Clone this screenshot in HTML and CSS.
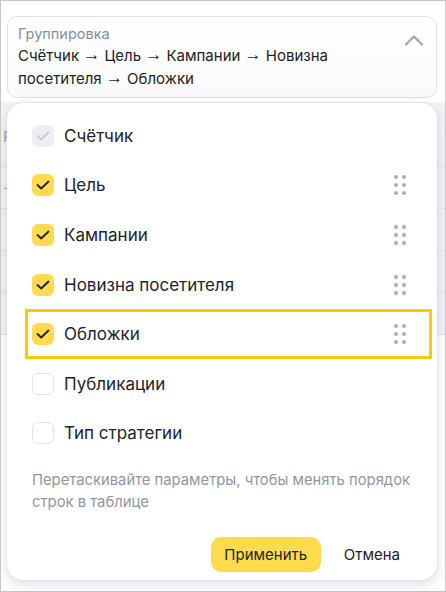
FILE: index.html
```html
<!DOCTYPE html>
<html lang="ru">
<head>
<meta charset="utf-8">
<link rel="stylesheet" href="styles.css">
</head>
<body>
<div class="frame">
  <div class="field">
    <div class="field-text">
      <div class="field-label">Группировка</div>
      <div class="field-value">Счётчик <span class="arr">→</span> Цель <span class="arr">→</span> Кампании <span class="arr">→</span> Новизна посетителя <span class="arr">→</span> Обложки</div>
    </div>
    <svg class="chevron" width="20" height="12" viewBox="0 0 20 12"><path d="M2 10.5 L10 2.5 L18 10.5" fill="none" stroke="#a3a8b9" stroke-width="2.4" stroke-linecap="round" stroke-linejoin="round"/></svg>
  </div>
  <div class="table">
    <div class="trow trow-head"><span class="tcell">Р</span></div>
    <div class="trow"><span class="tcell">-</span></div>
    <div class="trow"></div>
    <div class="trow"></div>
    <div class="trow"></div>
  </div>

  <div class="popup">
    <div class="list">
      <div class="row">
        <span class="cb cb-disabled"><svg width="14" height="10" viewBox="0 0 14 10"><path d="M1.5 5 L5.2 8.5 L12.5 1.5" fill="none" stroke="#c6cad6" stroke-width="1.8" stroke-linecap="round" stroke-linejoin="round"/></svg></span>
        <span class="label">Счётчик</span>
      </div>
      <div class="row">
        <span class="cb cb-on"><svg width="14" height="10" viewBox="0 0 14 10"><path d="M1.5 5 L5.2 8.5 L12.5 1.5" fill="none" stroke="#222" stroke-width="1.8" stroke-linecap="round" stroke-linejoin="round"/></svg></span>
        <span class="label">Цель</span>
        <span class="drag"><i></i><i></i><i></i><i></i><i></i><i></i></span>
      </div>
      <div class="row">
        <span class="cb cb-on"><svg width="14" height="10" viewBox="0 0 14 10"><path d="M1.5 5 L5.2 8.5 L12.5 1.5" fill="none" stroke="#222" stroke-width="1.8" stroke-linecap="round" stroke-linejoin="round"/></svg></span>
        <span class="label">Кампании</span>
        <span class="drag"><i></i><i></i><i></i><i></i><i></i><i></i></span>
      </div>
      <div class="row">
        <span class="cb cb-on"><svg width="14" height="10" viewBox="0 0 14 10"><path d="M1.5 5 L5.2 8.5 L12.5 1.5" fill="none" stroke="#222" stroke-width="1.8" stroke-linecap="round" stroke-linejoin="round"/></svg></span>
        <span class="label">Новизна посетителя</span>
        <span class="drag"><i></i><i></i><i></i><i></i><i></i><i></i></span>
      </div>
      <div class="row row-active">
        <span class="cb cb-on"><svg width="14" height="10" viewBox="0 0 14 10"><path d="M1.5 5 L5.2 8.5 L12.5 1.5" fill="none" stroke="#222" stroke-width="1.8" stroke-linecap="round" stroke-linejoin="round"/></svg></span>
        <span class="label">Обложки</span>
        <span class="drag"><i></i><i></i><i></i><i></i><i></i><i></i></span>
      </div>
      <div class="row">
        <span class="cb cb-off"></span>
        <span class="label">Публикации</span>
      </div>
      <div class="row">
        <span class="cb cb-off"></span>
        <span class="label">Тип стратегии</span>
      </div>
    </div>
    <p class="hint">Перетаскивайте параметры, чтобы менять порядок строк в таблице</p>
    <div class="actions">
      <button class="btn btn-apply">Применить</button>
      <button class="btn btn-cancel">Отмена</button>
    </div>
  </div>
</div>
</body>
</html>
```

FILE: styles.css
```css
* { box-sizing: border-box; }
html, body { margin: 0; padding: 0; }
body {
  font-family: "Inter", "Roboto", "Liberation Sans", sans-serif;
  color: #222;
  background: #fff;
}
.frame {
  position: relative;
  width: 446px;
  height: 592px;
  border: 1px solid #c6c6c6;
  background: #fff;
  overflow: hidden;
}
.field {
  margin: 15px 8px 0 6px;
  height: 82px;
  border: 1px solid #dfe1ea;
  border-radius: 10px;
  background: linear-gradient(#fff, #fafafc);
  display: flex;
  align-items: flex-start;
  padding: 7px 12px 0 10px;
}
.field-text { flex: 1; }
.field-label {
  font-size: 14.5px;
  line-height: 20px;
  color: #8b8d98;
}
.field-value {
  font-size: 15px;
  line-height: 23px;
  color: #222;
  width: 320px;
}
.arr {
  display: inline-block;
  font-family: "Liberation Sans", sans-serif;
  font-size: 17px;
  line-height: 17px;
  vertical-align: 1px;
}
.chevron { margin-top: 10px; }
.table {
  margin-top: 4px;
  background: #f2f3f7;
}
.trow {
  height: 42px;
  border-bottom: 1px solid #e2e4ec;
  padding-left: 2px;
  font-size: 15px;
  line-height: 42px;
  color: #9aa0b4;
}
.trow-head { height: 65px; line-height: 70px; }
.popup {
  position: absolute;
  left: 6px;
  top: 102px;
  width: 430px;
  height: 477px;
  background: #fff;
  border-radius: 16px;
  box-shadow: 0 4px 12px rgba(60, 70, 120, 0.18), 0 0 2px rgba(60, 70, 120, 0.12);
  padding: 8px 0 0 0;
}
.list { display: flex; flex-direction: column; }
.row {
  display: flex;
  align-items: center;
  height: 49.6px;
  margin-left: 18px;
  width: 407px;
  border: 3px solid transparent;
  padding: 0 23px 0 4px;
}
.row-active { border-color: #fdcb00; }
.cb {
  width: 22px;
  height: 22px;
  border-radius: 6px;
  display: flex;
  align-items: center;
  justify-content: center;
  flex: none;
}
.cb-on { background: #ffdb4d; }
.cb-disabled { background: #eceef3; }
.cb-off { background: #fff; border: 1px solid #e0e2ea; }
.label {
  margin-left: 10px;
  font-size: 17px;
  color: #21232b;
  flex: 1;
}
.drag {
  width: 12px;
  display: grid;
  grid-template-columns: 4px 4px;
  column-gap: 4px;
  row-gap: 4px;
}
.drag i {
  display: block;
  width: 4px;
  height: 4px;
  border-radius: 50%;
  background: #a6abbd;
}
.hint {
  margin: 11px 24px 0 25px;
  font-size: 14.8px;
  line-height: 22px;
  color: #93969f;
}
.actions {
  display: flex;
  justify-content: flex-end;
  gap: 10px;
  margin-top: 24px;
  padding-right: 24px;
}
.btn {
  font-family: inherit;
  font-size: 15px;
  height: 35px;
  border: none;
  border-radius: 10px;
  color: #222;
  background: transparent;
  padding: 0 13px;
}
.btn-apply {
  background: #ffdb4d;
  width: 110px;
  padding: 0;
}
```
